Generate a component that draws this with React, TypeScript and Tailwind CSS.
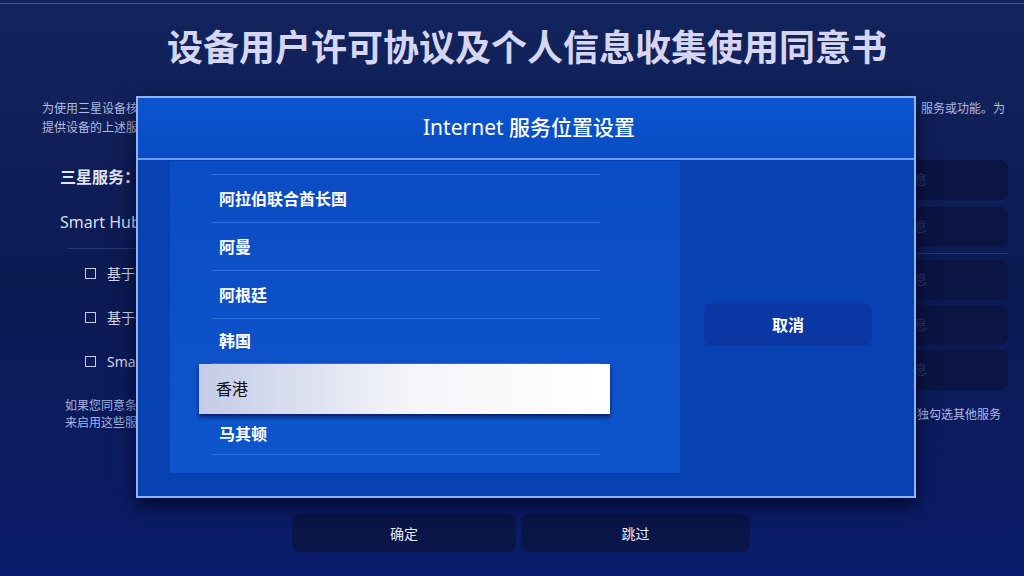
import React from "react";

const FONT = '"Noto Sans", "Noto Sans CJK SC", sans-serif';

const countries = [
  { name: "阿拉伯联合酋长国" },
  { name: "阿曼" },
  { name: "阿根廷" },
  { name: "韩国" },
  { name: "香港", selected: true },
  { name: "马其顿" },
];

function CheckRow({ label }: { label: string }) {
  return (
    <div className="flex h-[44px] items-center pl-[25px]">
      <span className="h-[11px] w-[11px] border-[1.5px] border-[#c6cbe4]" />
      <span className="ml-[11px] text-[14px] text-[#d6daf0]">{label}</span>
    </div>
  );
}

function SideButton() {
  return (
    <div className="flex h-[40px] w-[240px] items-center justify-center rounded-[8px] bg-[#0a1544] text-[13px] text-[#26366e]">
      查看详细信息
    </div>
  );
}

function LocationDialog() {
  return (
    <div className="absolute left-[136px] top-[96px] flex h-[402px] w-[780px] flex-col border-2 border-[#8db5f6] bg-[#0841b2] shadow-[0_8px_18px_rgba(0,0,20,0.7)]">
      <div className="flex h-[62px] items-center justify-center border-b-2 border-[#6f9ff0] bg-gradient-to-b from-[#0b55cf] to-[#0a4cc4] pl-[6px]">
        <span className="text-[21px] text-white">
          <span className="font-normal">Internet</span>{" "}
          <span className="font-medium">服务位置设置</span>
        </span>
      </div>
      <div className="flex flex-1">
        <div className="ml-[32px] mt-[1px] h-[312px] w-[510px] bg-gradient-to-b from-[#0b4cc4] to-[#0e55cc] pt-[13px]">
          <div className="ml-[42px] mr-[80px] border-t border-[#2f6fdc]">
            {countries.map((c) =>
              c.selected ? (
                <div
                  key={c.name}
                  className="-ml-[13px] -mr-[10px] flex h-[50px] items-center bg-gradient-to-r from-[#c3cbe6] via-[#f4f5f9] to-white pl-[17px] text-[16px] text-[#111] shadow-[0_3px_4px_rgba(0,10,60,0.7)]"
                >
                  {c.name}
                </div>
              ) : (
                <div
                  key={c.name}
                  className={`flex items-center border-b border-[#2f6fdc] pl-[7px] text-[16px] font-bold text-white ${
                    c.name === "马其顿" ? "h-[41px]" : c.name === "韩国" ? "h-[45px]" : "h-[48px]"
                  }`}
                >
                  {c.name}
                </div>
              )
            )}
          </div>
        </div>
        <div className="flex flex-1 items-start justify-center pt-[143px] pr-[18px]">
          <div className="flex h-[43px] w-[168px] items-center justify-center rounded-[8px] bg-[#0a37a4] text-[16px] font-bold text-white">
            取消
          </div>
        </div>
      </div>
    </div>
  );
}

export default function App() {
  return (
    <div
      className="relative flex h-[576px] w-[1024px] flex-col overflow-hidden bg-gradient-to-b from-[#13245c] via-[#0c1a52] to-[#0b1c6c]"
      style={{ fontFamily: FONT }}
    >
      <div className="mt-[3px] h-px bg-[#3b5396]" />
      <div className="mt-[20px] h-[48px] pl-[30px] text-center text-[36px] font-bold leading-[48px] text-[#d6d6f2]">
        设备用户许可协议及个人信息收集使用同意书
      </div>

      <div className="mt-[27px] pl-[42px] pr-[19px] text-[12px] leading-[19px] text-[#b2bbe2]">
        <div className="flex justify-between">
          <span>为使用三星设备核心功能，需要您同意以下条款。</span>
          <span>服务或功能。为</span>
        </div>
        <div>提供设备的上述服务，三星将收集和使用您的个人信息。</div>
      </div>

      <div className="mt-[23px] flex justify-between">
        <div className="flex flex-col pl-[60px]">
          <div className="mt-[5px] text-[16px] font-bold leading-[24px] text-[#e2e4f4]">三星服务：</div>
          <div className="mt-[21px] text-[16px] leading-[24px] text-[#d8dcf0]">Smart Hub 条款与条件、隐私声明</div>
          <div className="ml-[8px] mt-[14px] h-px w-[700px] bg-[#2a3a78]" />
          <div className="mt-[2px]">
            <CheckRow label="基于兴趣的广告服务" />
            <CheckRow label="基于兴趣的内容推荐" />
            <CheckRow label="Smart Hub 营销信息" />
          </div>
          <div className="mt-[14px] pl-[5px] text-[12px] leading-[17px] text-[#a9b4e2]">
            <div>如果您同意条款和条件，请选择“确定”</div>
            <div>来启用这些服务。</div>
          </div>
        </div>

        <div className="mr-[29px] flex flex-col items-end">
          <SideButton />
          <div className="mt-[7px]">
            <SideButton />
          </div>
          <div className="my-[6px] h-px w-[140px] bg-[#24387a]" />
          <SideButton />
          <div className="mt-[5px]">
            <SideButton />
          </div>
          <div className="mt-[5px]">
            <SideButton />
          </div>
          <div className="mt-[16px] whitespace-nowrap pr-[7px] text-[12px] leading-[18px] text-[#b0bae4]">
            单独勾选其他服务
          </div>
        </div>
      </div>

      <div className="mt-auto flex justify-center gap-[5px] pb-[24px] pl-[18px]">
        <div className="flex h-[38px] w-[224px] items-center justify-center rounded-[8px] bg-[#0a1548] text-[14px] text-[#e6e8f6]">
          确定
        </div>
        <div className="flex h-[38px] w-[229px] items-center justify-center rounded-[8px] bg-[#0a1548] text-[14px] text-[#e6e8f6]">
          跳过
        </div>
      </div>

      <LocationDialog />
    </div>
  );
}
